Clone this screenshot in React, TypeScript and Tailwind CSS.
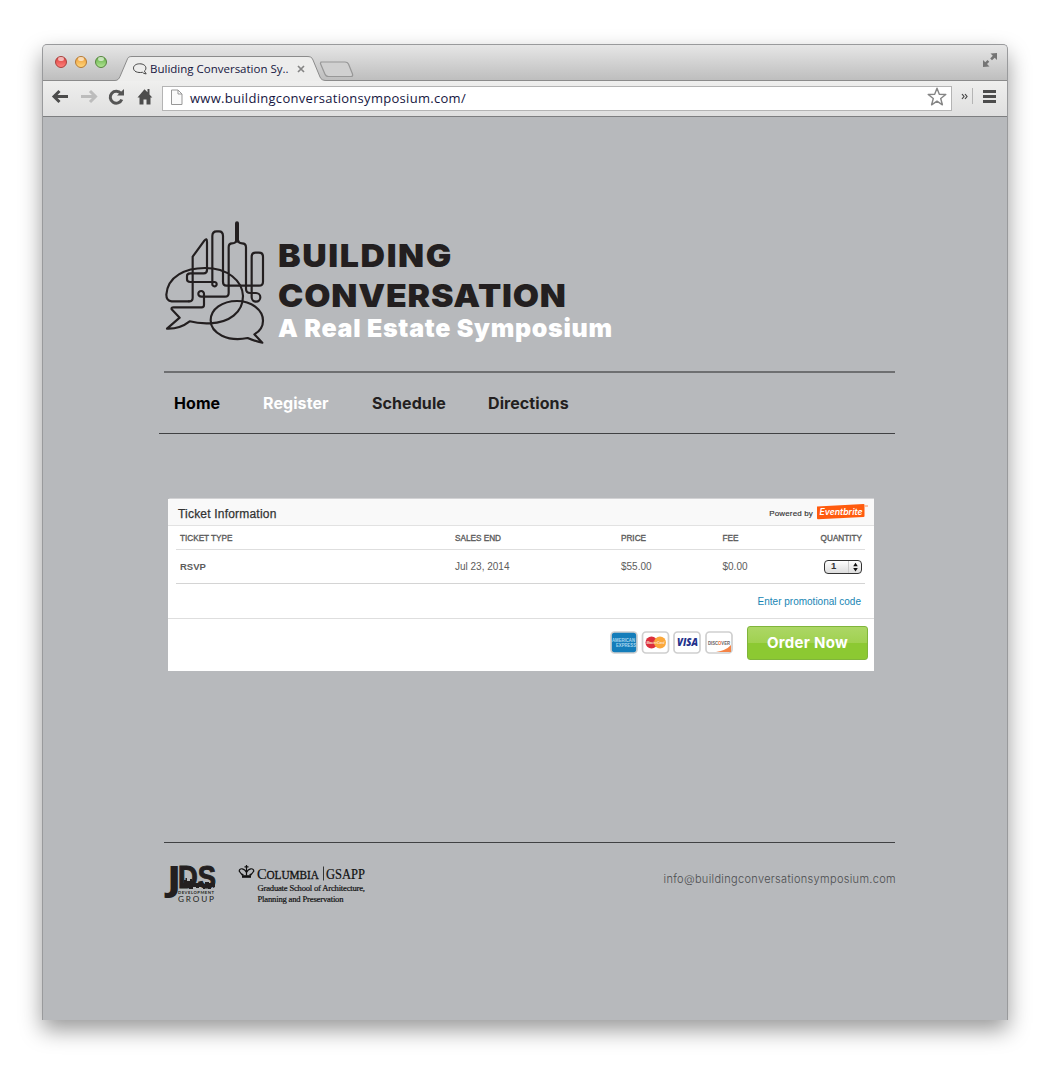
import React from "react";

const navItems = [
  { label: "Home", className: "ml-[10px] w-[89px] text-black" },
  { label: "Register", className: "w-[109px] text-white" },
  { label: "Schedule", className: "w-[116px] text-[#231f20]" },
  { label: "Directions", className: "text-[#231f20]" },
];

function TrafficLight({ className }: { className: string }) {
  return (
    <span className={`relative block h-3 w-3 rounded-full border ${className}`}>
      <span className="absolute left-[2px] top-0 h-[4px] w-[6px] rounded-full bg-white/60" />
    </span>
  );
}

function TabStrip() {
  return (
    <div className="relative flex h-[36px] rounded-t-[4px] bg-linear-to-b from-[#e6e6e6] to-[#bdbdbd]">
      <div className="flex w-[74px] shrink-0 items-start gap-2 pl-[12px] pt-[11px]">
        <TrafficLight className="border-[#a8403c] bg-linear-to-b from-[#d83b3b] to-[#ff7f7b]" />
        <TrafficLight className="border-[#b57a33] bg-linear-to-b from-[#eb9a30] to-[#ffd67a]" />
        <TrafficLight className="border-[#55853d] bg-linear-to-b from-[#62ad45] to-[#b0e592]" />
      </div>
      <svg className="absolute left-0 top-0" width="964" height="36" viewBox="0 0 964 36" fill="none">
        <path d="M0 35.500H72c3 0 4-2 5-4L84 15c1-3 2-3.500 5-3.500H264c3 0 5 .5 6 3.500l7 17c1 2.500 3 3.500 6 3.500H964V36H0z" fill="#ededec" />
        <path d="M0 35.500H72c3 0 4-2 5-4L84 15c1-3 2-3.500 5-3.500H264c3 0 5 .5 6 3.500l7 17c1 2.500 3 3.500 6 3.500H964" stroke="#8b8b8b" />
        <path d="M278 17h24c2 0 3 1 3.500 2l4 10c.6 2 0 2.500-2 2.500h-22c-2 0-3-1-3.600-2.500l-4.500-10.500z" fill="#d0d0d0" stroke="#979797" strokeWidth="1.200" />
        <path d="M99.500 27.300c-5 .8-9-.8-9-4.200 0-2.600 2.700-4.300 6.200-4.300s6.200 1.700 6.200 4.300c0 1.500-.7 2.300-1.500 3l1.800 2.800c-1.800-.2-3-.7-3.700-1.600z" stroke="#444" />
        <path d="m255 21 6 6m0-6-6 6" stroke="#858585" strokeWidth="1.700" />
        <g fill="#757575">
          <path d="M954 8v7l-2.300-2.300-2.700 2.600-1.800-1.800 2.600-2.700-2.300-2.300z" />
          <path d="M940 22v-7l2.300 2.300 2.200-2.300 1.800 1.800-2.300 2.300 2.500 2.400z" />
        </g>
      </svg>
      <span className="relative ml-[33px] mt-[16px] whitespace-nowrap font-['Open_Sans'] text-[11.500px] leading-4 text-[#16163f]">
        Buliding Conversation Sy..
      </span>
    </div>
  );
}

function Toolbar() {
  return (
    <div className="flex h-[36px] border-b border-[#7d7e80] bg-linear-to-b from-[#efefee] to-[#dfdfdf]">
      <svg className="shrink-0" width="119" height="35" viewBox="0 0 119 35" fill="none">
        <g strokeWidth="3" strokeLinejoin="miter">
          <path d="M11 15.500H25M16.500 10 11 15.500l5.500 5.500" stroke="#4c4c4c" />
          <path d="M38 15.500H52M47 10 52.500 15.500 47 21" stroke="#bcbcbc" />
          <path d="M78 12.500a6 6 0 1 0 .8 6" stroke="#555" />
        </g>
        <path d="M74 14.500h7V8z" fill="#555" />
        <path d="m94.500 16.500 7-8.200 3 3V8h2v5.500l2.800 3h-1.800v7h-4v-5h-3v5h-4v-7z" fill="#4c4c4c" />
      </svg>
      <div className="mt-[5px] flex h-[25px] w-[790px] shrink-0 items-center border border-[#b4b4b4] bg-white">
        <svg className="mb-[3px] ml-[7px]" width="13" height="17" viewBox="0 0 13 17" fill="#fafafa" stroke="#979797">
          <path d="M1.500 1H8l4 4v10.500H1.500zM8 1v4h4" />
        </svg>
        <span className="mb-px ml-[7px] grow whitespace-nowrap font-['Open_Sans'] text-[13px] leading-5 tracking-[0.290px] text-[#16163f]">
          www.buildingconversationsymposium.com/
        </span>
        <svg className="mb-[4px] mr-[4px]" width="20" height="20" viewBox="0 0 20 20" fill="#fff" stroke="#858585" strokeWidth="1.400">
          <path d="m10 1.200 2.300 6 6.500.3-5.100 4 1.700 6.300-5.400-3.600-5.400 3.600 1.700-6.300-5.100-4 6.500-.3z" strokeLinejoin="round" />
        </svg>
      </div>
      <svg className="shrink-0" width="55" height="35" viewBox="0 0 55 35" fill="none">
        <path d="m10 13 2 2.500-2 2.500m3-5 2 2.500-2 2.500" stroke="#444" strokeWidth="1.200" />
        <path d="M20.500 7v16" stroke="#b5b5b5" />
        <path d="M31 10.500h13M31 15.500h13M31 20.500h13" stroke="#4c4c4c" strokeWidth="3" />
      </svg>
    </div>
  );
}

function SkylineLogo() {
  return (
    <svg className="shrink-0" width="120" height="140" viewBox="0 0 360 420" fill="none" stroke="#231f20" strokeWidth="6.500" strokeLinejoin="round" strokeLinecap="round">
      <path d="M102 268H50Q34 266 34 248C38 192 92 168 150 168C218 168 262 206 264 252C264 302 222 332 165 334C138 335 118 332 104 328C86 342 62 351 36 350L74 317L50 292Q48 286 56 286H140Q147 286 147 278V246A8.500 8.500 0 1 0 139 254H210Q221 254 221 243V106Q221 94 231 94Q243 94 244 84" />
      <path d="M102 268Q113 268 113 257V134L148 86Q156 76 156 90V174Q156 184 146 184H106Q96 184 96 192V202Q96 210 106 210H178A6.500 6.500 0 1 1 172 216V72Q172 58 185 58H192Q204 58 204 72V210Q204 221 214 221H312Q324 221 324 209V134Q324 122 312 122H302Q290 122 290 134V243" />
      <path d="M249 84Q250 94 261 94Q273 94 273 106V230Q273 243 286 243H303A13 13 0 1 1 290 256V243" />
      <path d="M246 34V86" strokeWidth="12" />
      <path d="M278 378C220 390 167 365 167 325C167 291 202 267 246 267C290 267 324 294 324 326C324 345 312 359 298 367L322 392Q298 387 278 378Z" />
    </svg>
  );
}

function Header() {
  return (
    <header className="ml-[112px] mt-[95px] flex h-[140px]">
      <SkylineLogo />
      <div className="ml-[3px] mt-[24px] whitespace-nowrap font-[Inter] font-black text-[#231f20]">
        <div className="origin-left scale-x-[1.060] text-[32px] leading-[40px] tracking-[1.500px]">BUILDING</div>
        <div className="origin-left scale-x-[1.060] text-[32px] leading-[40px] tracking-[0.750px]">CONVERSATION</div>
        <div className="text-[25px] leading-[25px] tracking-[0.700px] text-white">A Real Estate Symposium</div>
      </div>
    </header>
  );
}

function Navigation() {
  return (
    <nav className="mt-[19px] pl-[116px]">
      <div className="ml-[5px] h-[2px] w-[731px] bg-[#6e6f71]" />
      <div className="flex h-[60px] items-center pl-[5px] font-[Inter] text-[16px] font-bold tracking-[0.080px]">
        {navItems.map((item) => (
          <a key={item.label} className={item.className}>{item.label}</a>
        ))}
      </div>
      <div className="h-px w-[736px] bg-[#404143]" />
    </nav>
  );
}

function Cards() {
  return (
    <svg className="shrink-0" width="124" height="24" viewBox="0 0 124 24">
      <g stroke="#cfcfcf" strokeWidth="1.700" fill="#fff">
        <rect x="1" y="1" width="26" height="21" rx="3.500" fill="#147dba" />
        <rect x="32.500" y="1" width="26" height="21" rx="3.500" />
        <rect x="64" y="1" width="26" height="21" rx="3.500" />
        <rect x="96" y="1" width="26" height="21" rx="3.500" />
      </g>
      <g fill="#a9d8ef" fontFamily="Liberation Sans" fontWeight="700" fontSize="4.500">
        <text x="2" y="11" textLength="23" lengthAdjust="spacingAndGlyphs">AMERICAN</text>
        <text x="6" y="16" textLength="20" lengthAdjust="spacingAndGlyphs">EXPRESS</text>
      </g>
      <circle cx="41.500" cy="11.500" r="6" fill="#dc2f3d" />
      <circle cx="50" cy="11.500" r="6" fill="#fba83b" />
      <text x="36.500" y="13" fontFamily="Liberation Sans" fontWeight="700" fontStyle="italic" fontSize="4" fill="#fbe3d0" textLength="18" lengthAdjust="spacingAndGlyphs">MasterCard</text>
      <text x="67" y="15" fontFamily="Open Sans" fontWeight="800" fontStyle="italic" fontSize="10" fill="#23318b" textLength="21" lengthAdjust="spacingAndGlyphs">VISA</text>
      <path d="M121 14v7h-15q10-1.500 15-7z" fill="#f58345" />
      <text x="98" y="13.500" fontFamily="Liberation Sans" fontWeight="700" fontSize="5" fill="#666" textLength="22" lengthAdjust="spacingAndGlyphs">DISC<tspan fill="#f26c2b">O</tspan>VER</text>
    </svg>
  );
}

function TicketPanel() {
  const columns = "grid grid-cols-[275px_166px_101.500px_1fr_auto] items-center pl-1";
  return (
    <section className="ml-[125px] mt-[64px] h-[173px] w-[706px] rounded-tl-[3px] border-t border-[#d2d2d4] bg-white font-['Liberation_Sans'] text-[#5c5c5c]">
      <div className="flex h-[27px] items-center border-b border-[#e2e2e2] bg-[#f9f9f9] pl-[10px] pt-[3px]">
        <h2 className="grow text-[12px] tracking-[0.200px] text-[#333] [-webkit-text-stroke:0.250px_#333]">Ticket Information</h2>
        <span className="mr-[3px] text-[8px] tracking-[0.150px] text-[#333] [-webkit-text-stroke:0.150px_#333]">Powered by</span>
        <svg className="mb-[4px] mr-[4px]" width="54" height="17" viewBox="0 0 54 17">
          <path d="M1 3.500 47.500 1q1 0 1 1V13q0 1-1 1.100L2 16.200q-1 0-1-1z" fill="#ff5b0e" />
          <text x="3.500" y="11.800" fontFamily="Inter" fontSize="9" fontWeight="600" fontStyle="italic" fill="#fff" textLength="43" lengthAdjust="spacingAndGlyphs">Eventbrite</text>
          <path d="M49 3h3" stroke="#ff8a55" />
        </svg>
      </div>
      <div className="pl-2 pr-[9px]">
        <div className={`${columns} h-[24px] border-b border-[#dedede] pt-[3px] text-[8.200px] [-webkit-text-stroke:0.350px_#5c5c5c]`}>
          <span>TICKET TYPE</span><span>SALES END</span><span>PRICE</span><span>FEE</span><span className="pr-[3px]">QUANTITY</span>
        </div>
        <div className={`${columns} h-[34px] border-b border-[#d4d4d4] text-[10px]`}>
          <span className="pt-[2px] text-[9.500px] font-bold">RSVP</span><span>Jul 23, 2014</span><span>$55.00</span><span>$0.00</span>
          <span className="mr-[3px] flex h-[14px] w-[38px] items-center rounded-[4px] border border-[#333] bg-linear-to-b from-white to-[#ddd] pl-[6px] text-[9.500px] font-bold text-[#333]">
            <span className="grow">1</span>
            <svg width="13" height="12" viewBox="0 0 13 12"><path d="M.5 0v12" stroke="#ccc" /><path d="m7.500 1.800 2.300 3.400H5.200zM7.500 10.400 5.200 7h4.600z" fill="#111" /></svg>
          </span>
        </div>
      </div>
      <div className="flex h-[35px] items-center justify-end border-b border-[#dedede] pr-[13px] text-[10px] text-[#1785b4]">Enter promotional code</div>
      <div className="flex h-[51px] items-start justify-end pr-[6px] pt-[7px]">
        <div className="mr-[13px] mt-[5px]"><Cards /></div>
        <button className="h-[34px] w-[121px] rounded-[3px] border border-[#80b53b] bg-linear-to-b from-[#acd765] from-0% via-[#a0d150] via-50% to-[#8cc932] to-50% pt-px font-[Inter] text-[15px] font-bold tracking-[0.300px] text-white">Order Now</button>
      </div>
    </section>
  );
}

function JdsLogo() {
  return (
    <svg className="overflow-visible" width="54" height="40" viewBox="0 0 54 40" fill="#231f20" fontFamily="Open Sans">
      <text transform="translate(3.500 26.500) scale(1.250 1.140)" fontSize="30" fontWeight="800">J</text>
      <text x="14" y="24.500" fontFamily="Liberation Sans" fontSize="31" fontWeight="700" textLength="38" lengthAdjust="spacingAndGlyphs" stroke="#231f20" strokeWidth="1">DS</text>
      <path d="M16 24v-4h4v-3h1.500v-2H23v3h3v-2h2v2h3v2h4v-1h3v3h3v-3h4v1h6v4l-2 1v-1h-2v2h-3v-2h-3v2h-2v-2h-4v1h-3v-1h-3v2h-4v-2h-4v1h-4z" />
      <text x="14" y="30.500" fontFamily="Lato" fontSize="4.200" fontWeight="700" textLength="36">DEVELOPMENT</text>
      <text x="14" y="38.500" fontFamily="Lato" fontSize="8.200" textLength="36">GROUP</text>
    </svg>
  );
}

function ColumbiaLogo() {
  return (
    <svg className="ml-[20px] overflow-visible" width="130" height="42" viewBox="0 0 130 42" fill="#111" fontFamily="Liberation Serif">
      <g fill="none" stroke="#111" strokeWidth="1.200">
        <path d="M4.500 12.500 1.200 8q.3-2.500 3-2.200Q7 6.200 8.500 9.500q1.500-3.300 4.300-3.700 2.700-.3 3 2.200l-3.300 4.500M8.500 2v10.500M6.500 3.800h4M3 10.500l2.500 1.500M14 10.500l-2.500 1.500" />
        <path d="M4 13.500h9" strokeWidth="2.600" />
      </g>
      <text x="19" y="15.500" fontSize="14.500" stroke="#111" strokeWidth=".2">C</text>
      <text x="28.500" y="15.500" fontSize="11.500" stroke="#111" strokeWidth=".3" textLength="52.500" lengthAdjust="spacingAndGlyphs">OLUMBIA</text>
      <path d="M85.500 3.500v14" stroke="#111" strokeWidth=".8" />
      <text x="88" y="15.500" fontSize="14" stroke="#111" strokeWidth=".2" textLength="39" lengthAdjust="spacingAndGlyphs">GSAPP</text>
      <g fontSize="8.600" stroke="#111" strokeWidth=".2">
        <text x="19.500" y="28.200" textLength="107.500">Graduate School of Architecture,</text>
        <text x="19.500" y="38.500" textLength="86">Planning and Preservation</text>
      </g>
    </svg>
  );
}

function Footer() {
  return (
    <footer className="ml-[121px] mt-[171px] w-[732px]">
      <div className="h-px w-[731px] bg-[#404143]" />
      <div className="flex pt-[20px]">
        <JdsLogo />
        <ColumbiaLogo />
        <span className="ml-auto pt-[8px] font-[Inter] text-[11px] font-light leading-4 tracking-[0.320px] text-[#4c4d4f]">info@buildingconversationsymposium.com</span>
      </div>
    </footer>
  );
}

export default function App() {
  return (
    <div className="h-[1069px] w-[1050px] overflow-hidden bg-white px-[42px] pt-[44px]">
      <div className="h-[976px] w-[966px] rounded-t-[5px] border border-b-0 border-[#999a9c] bg-[#b7b9bc] shadow-[0_10px_22px_rgba(0,0,0,0.400)]">
        <TabStrip />
        <Toolbar />
        <Header />
        <Navigation />
        <TicketPanel />
        <Footer />
      </div>
    </div>
  );
}
